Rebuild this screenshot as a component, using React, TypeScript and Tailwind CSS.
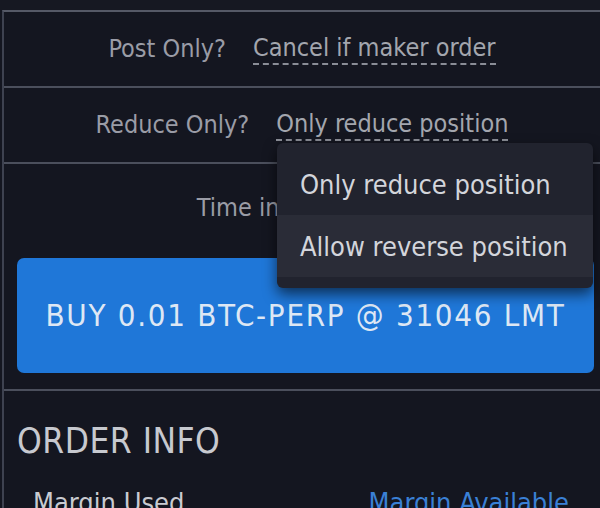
import React from "react";

const font = { fontFamily: '"DejaVu Sans Condensed", "DejaVu Sans", sans-serif', fontStretch: "condensed" } as const;

const Row = ({ label, value }: { label: string; value: string }) => (
  <div className="h-[76px] flex items-center justify-center gap-[27px] border-b-2 border-[#4b4f5c]">
    <span className="text-[#9a9ca6]">{label}</span>
    <span className="text-[#a3a6ae] border-b-2 border-dashed border-[#8a8d96] leading-[30px]">{value}</span>
  </div>
);

const App = () => {
  return (
    <div
      className="relative w-[600px] h-[508px] overflow-hidden bg-[#141620] text-[25px]"
      style={font}
    >
      <div className="h-[10px] bg-[#161822]"></div>
      <div className="ml-[2px] border-l-2 border-t-2 border-[#3e4250] border-t-[#555966] h-full">
        <Row label="Post Only?" value="Cancel if maker order" />
        <Row label="Reduce Only?" value="Only reduce position" />

        <div className="h-[94px] flex items-center justify-center pb-[6px] pr-[48px]">
          <span className="text-[#9a9ca6]">Time in Force?</span>
        </div>

        <div className="pl-[13px] pr-[6px] pb-[16px] border-b-2 border-[#4b4f5c]">
          <button className="w-full h-[115px] rounded-[7px] bg-[#1f77d8] text-[#dde7f4] text-[31px] tracking-[1.7px]">
            BUY 0.01 BTC-PERP @ 31046 LMT
          </button>
        </div>

        <div className="pl-[13px] pt-[28px]">
          <div className="text-[35px] text-[#c7c9cf] tracking-[0.5px] leading-[44px]">ORDER INFO</div>
          <div className="flex justify-between pl-[16px] pr-[31px] mt-[20px] text-[27px] text-[#c9cbd1]">
            <span>Margin Used</span>
            <span className="text-[#3a80d6]">Margin Available</span>
          </div>
        </div>
      </div>

      <div className="absolute left-[277px] top-[143px] w-[316px] rounded-[6px] bg-[#21232e] shadow-[0_6px_14px_rgba(0,0,0,0.6)] text-[27px] text-[#d3d5db] pb-[11px] overflow-hidden">
        <div className="h-[72px] flex items-end pb-[10px] pl-[23px]">Only reduce position</div>
        <div className="h-[62px] flex items-center pt-[2px] pl-[23px] bg-[#2a2c37]">Allow reverse position</div>
      </div>
    </div>
  );
};

export default App;
